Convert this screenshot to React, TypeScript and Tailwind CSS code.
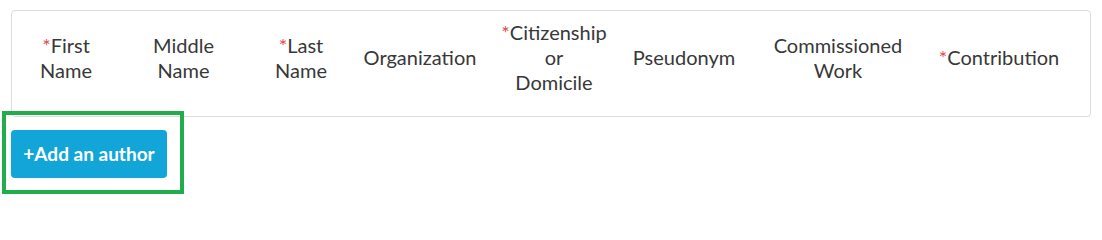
import React from "react";

const cols: { label: string[]; req?: boolean }[] = [
  { label: ["First", "Name"], req: true },
  { label: ["Middle", "Name"] },
  { label: ["Last", "Name"], req: true },
  { label: ["Organization"] },
  { label: ["Citizenship", "or", "Domicile"], req: true },
  { label: ["Pseudonym"] },
  { label: ["Commissioned", "Work"] },
  { label: ["Contribution"], req: true },
];

export default function App() {
  return (
    <div className="relative w-[1102px] h-[207px] bg-white pl-[11px] pr-[11px] pt-[10px] font-['Lato',sans-serif]">
      <div className="w-full h-[107px] pb-[12px] border border-[#dcdcdc] rounded-[4px] grid grid-cols-[108px_127px_108px_130px_138px_122px_186px_136px_1fr] items-center">
        {cols.map((c, i) => (
          <div key={i} className="text-center text-[20px] leading-[25px] text-[#383838]">
            {c.label.map((l, j) => (
              <div key={j}>
                {j === 0 && c.req && <span className="text-[#e5484d]">*</span>}
                {l}
              </div>
            ))}
          </div>
        ))}
      </div>
      <button className="block mt-[13px] w-[156px] h-[48px] rounded-[4px] bg-[#12a6d8] text-white text-[19px] font-bold">
        +Add an author
      </button>
      <div className="absolute left-[2px] top-[111px] w-[182px] h-[83px] border-[4px] border-[#21ad4b] pointer-events-none" />
    </div>
  );
}
